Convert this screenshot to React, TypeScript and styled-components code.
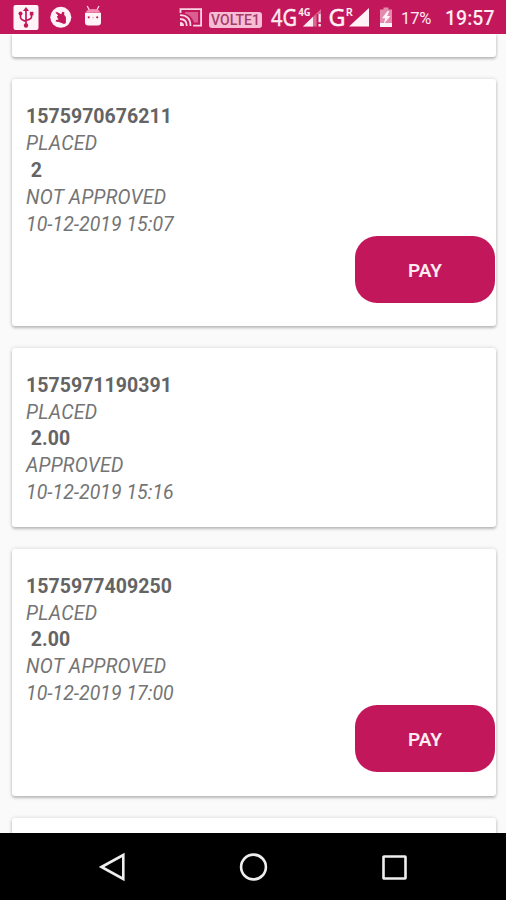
import React from "react";
import styled, { createGlobalStyle } from "styled-components";

const PINK = "#c2185b";

const GlobalStyle = createGlobalStyle`
  * { box-sizing: border-box; }
  body { margin: 0; background: #fafafa; font-family: Roboto, "Liberation Sans", sans-serif; }
`;

const Screen = styled.div`
  width: 506px;
  height: 900px;
  display: flex;
  flex-direction: column;
  overflow: hidden;
  background: #fafafa;
`;

const StatusBar = styled.header`
  flex: 0 0 34px;
  display: flex;
  align-items: flex-start;
  justify-content: space-between;
  padding: 0 11px 0 13px;
  background: ${PINK};
  color: #fdebf2;
`;

const StatusGroup = styled.div<{ $gap: number }>`
  display: flex;
  align-items: flex-start;
  height: 34px;
  gap: ${(p) => p.$gap}px;
`;

const Glyph = styled.svg`
  display: block;
  flex: none;
  height: 34px;
  overflow: visible;
`;

const VolteTag = styled.span`
  width: 53px;
  height: 16px;
  margin: 12px 1px 0 0;
  border-radius: 3px;
  background: #f7bdd4;
  color: #a83a6c;
  font: 500 14px/17px Roboto, sans-serif;
  text-align: center;
  white-space: nowrap;
`;

const Battery = styled.span`
  width: 31px;
  margin-left: 1px;
  font-size: 16.5px;
  line-height: 37px;
  letter-spacing: -0.1px;
`;

const Clock = styled.time`
  width: 50px;
  margin-left: 6px;
  font-size: 19.5px;
  font-weight: 500;
  line-height: 37px;
  white-space: nowrap;
`;

const OrderList = styled.main`
  flex: 1;
  min-height: 0;
  overflow: hidden;
  display: flex;
  flex-direction: column;
  gap: 22px;
  padding: 0 10px 0 12px;
`;

const Card = styled.article<{ $height: number }>`
  flex: 0 0 ${(p) => p.$height}px;
  display: flex;
  flex-direction: column;
  padding: 25px 1px 0 14px;
  border-radius: 3px;
  background: #fff;
  box-shadow: 0 2px 3px rgba(0, 0, 0, 0.22), 0 0 4px rgba(0, 0, 0, 0.14);
`;

const CutCard = styled(Card)`
  padding: 0;
  border-radius: 0 0 3px 3px;
`;

const Line = styled.div<{ $strong?: boolean; $spacing?: number }>`
  height: 26.8px;
  line-height: 26.8px;
  font-size: 19.5px;
  font-weight: ${(p) => (p.$strong ? 700 : 400)};
  font-style: ${(p) => (p.$strong ? "normal" : "italic")};
  letter-spacing: ${(p) => p.$spacing ?? 0}px;
  color: ${(p) => (p.$strong ? "#646464" : "#747474")};
  white-space: pre;
`;

const PayButton = styled.button`
  align-self: flex-end;
  width: 140px;
  height: 67px;
  margin-top: -2.4px;
  padding: 3px 0 0;
  border: 0;
  border-radius: 22px;
  background: ${PINK};
  color: #fdebf2;
  font: 600 19px/24px Roboto, sans-serif;
`;

const NavBar = styled.nav`
  flex: 0 0 67px;
  display: flex;
  justify-content: space-between;
  align-items: center;
  padding: 0 97px 0 97px;
  background: #000;
`;

const NavIcon = styled.svg`
  display: block;
  width: 30px;
  height: 30px;
  fill: none;
  stroke: #eee;
  stroke-width: 2.6;
`;

const UsbIcon = () => (
  <Glyph width="26" viewBox="0 0 26 34">
    <rect x="0.5" y="5" width="25" height="25" rx="2" fill="#fff3f8" />
    <g fill="none" stroke={PINK} strokeWidth="1.7">
      <path d="M13 9v16M7.5 14v3.5q0 2 5.5 4M18.5 14v3q0 2-5.5 3.5" />
    </g>
    <path d="M13 7l3 4h-6z" fill={PINK} />
    <circle cx="7.5" cy="13.5" r="2" fill={PINK} />
    <rect x="16.8" y="11.8" width="3.6" height="3.6" fill={PINK} />
    <circle cx="13" cy="25.5" r="2.2" fill={PINK} />
  </Glyph>
);

const TouchIcon = () => (
  <Glyph width="22" viewBox="0 0 22 34">
    <circle cx="9.8" cy="17.3" r="10.5" fill="#fff3f8" />
    <path
      d="M4.4 12.6l1.6-.6 4.2 2.3 1.2-2.6 2 .6-.3 2.4 1.8 2.2v6l-1.8 1.1-5.3-2-3.2-.4.4-1.6 2.6-.4-1.8-2.8 1.4-1.2z"
      fill={PINK}
    />
  </Glyph>
);

const AndroidIcon = () => (
  <Glyph width="18" viewBox="0 0 18 34">
    <path d="M3.2 6l2.4 4.5M15 6l-2.4 4.5" stroke="#ffd7e6" strokeWidth="1.3" />
    <path d="M2 12.5q0-3.5 7-3.5t7 3.5z" fill="#f48ab4" />
    <path d="M1 12.8h16v9.5q0 3.2-3.2 3.2H4.2Q1 25.5 1 22.3z" fill="#fff3f8" />
    <circle cx="4.7" cy="17.3" r="1.1" fill={PINK} />
    <circle cx="13.2" cy="17.3" r="1.1" fill={PINK} />
    <path d="M8 17.7h2" stroke="#f7a6c6" />
  </Glyph>
);

const CastIcon = () => (
  <Glyph width="24" viewBox="0 0 24 34">
    <g fill="none" stroke="#fbd5e4" strokeWidth="1.8">
      <path d="M2.5 13V9.2h20.6v16.5h-8" />
      <path d="M2 15.2q10.5 0 10.5 10.8M2 19q6.8 0 6.8 7" />
    </g>
    <path d="M7 12h13v10.5h-4Q13.5 15 7 13.5z" fill="#d95f90" />
    <path d="M2 22q4 0 4 4H2z" fill="#fbd5e4" />
  </Glyph>
);

const FourGSignal = () => (
  <Glyph width="54" viewBox="0 0 54 34" fill="#fdebf2" fontFamily="Noto Sans, sans-serif">
    <text x="1" y="26" fontSize="23" strokeWidth="0.4" stroke="#fdebf2" textLength="26" lengthAdjust="spacingAndGlyphs">4G</text>
    <text x="28.5" y="15.5" fontSize="10.5" fontWeight="700" textLength="12" lengthAdjust="spacingAndGlyphs">4G</text>
    <path d="M33 26.5L51 9v17.5z" fill="#dc6896" />
    <path d="M33 26.5l10-9.7v9.7z" />
    <path d="M46.6 14h6.4v13h-6.4z" fill={PINK} />
    <path d="M48.5 14h2.3v8.2h-2.3zM48.5 24h2.3v2.5h-2.3z" />
  </Glyph>
);

const RoamingSignal = () => (
  <Glyph width="40" viewBox="0 0 40 34" fill="#fff3f8" fontFamily="Noto Sans, sans-serif">
    <text x="-2.5" y="26" fontSize="23" strokeWidth="0.4" stroke="#fff3f8" textLength="17" lengthAdjust="spacingAndGlyphs">G</text>
    <text x="14.8" y="15.5" fontSize="11" fontWeight="600">R</text>
    <path d="M18 26.5L38 8v18.5z" />
  </Glyph>
);

const ChargingIcon = () => (
  <Glyph width="15" viewBox="-1 0 15 34">
    <path d="M4.5 7.5h5v2H13V27H1V9.5h3.5z" fill="#e38aae" />
    <path d="M1 23h12v4H1z" fill="#fff3f8" />
    <path d="M8.5 11L3 18.3h3.2L4.7 24l6.8-8H8.2l2-5z" fill="#fff3f8" />
  </Glyph>
);

type Order = { id: string; amount: string; approval: string; date: string; height: number };

const orders: Order[] = [
  { id: "1575970676211", amount: "2", approval: "NOT APPROVED", date: "10-12-2019 15:07", height: 246.5 },
  { id: "1575971190391", amount: "2.00", approval: "APPROVED", date: "10-12-2019 15:16", height: 179 },
  { id: "1575977409250", amount: "2.00", approval: "NOT APPROVED", date: "10-12-2019 17:00", height: 247 },
];

const OrderCard = ({ order }: { order: Order }) => (
  <Card $height={order.height}>
    <Line $strong $spacing={0.04}>{order.id}</Line>
    <Line $spacing={0.22}>PLACED</Line>
    <Line $strong>{" " + order.amount}</Line>
    <Line $spacing={0.22}>{order.approval}</Line>
    <Line $spacing={0.02}>{order.date}</Line>
    {order.approval === "NOT APPROVED" && <PayButton>PAY</PayButton>}
  </Card>
);

export default function App() {
  return (
    <>
      <GlobalStyle />
      <Screen>
        <StatusBar>
          <StatusGroup $gap={11.5}>
            <UsbIcon />
            <TouchIcon />
            <AndroidIcon />
          </StatusGroup>
          <StatusGroup $gap={7}>
            <CastIcon />
            <VolteTag>VOLTE1</VolteTag>
            <FourGSignal />
            <RoamingSignal />
            <ChargingIcon />
            <Battery>17%</Battery>
            <Clock>19:57</Clock>
          </StatusGroup>
        </StatusBar>
        <OrderList>
          <CutCard $height={23.4} />
          {orders.map((o) => (
            <OrderCard key={o.id} order={o} />
          ))}
          <Card $height={60} />
        </OrderList>
        <NavBar>
          <NavIcon viewBox="0 0 30 30">
            <path d="M4.5 15L26.3 3v24z" />
          </NavIcon>
          <NavIcon viewBox="0 0 30 30">
            <circle cx="15.5" cy="15" r="12.4" />
          </NavIcon>
          <NavIcon viewBox="0 0 30 30">
            <rect x="4.5" y="4.5" width="22" height="22" rx="0.5" />
          </NavIcon>
        </NavBar>
      </Screen>
    </>
  );
}
